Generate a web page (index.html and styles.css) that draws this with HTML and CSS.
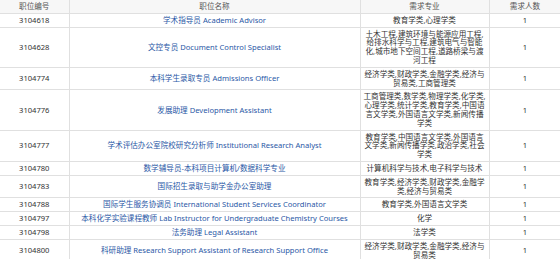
FILE: index.html
```html
<!DOCTYPE html>
<html lang="zh-CN">
<head>
<meta charset="utf-8">
<title>职位列表</title>
<link rel="stylesheet" href="styles.css">
</head>
<body>
<table class="jobs">
  <colgroup>
    <col class="c-id">
    <col class="c-name">
    <col class="c-major">
    <col class="c-num">
  </colgroup>
  <thead>
    <tr><th>职位编号</th><th>职位名称</th><th>需求专业</th><th>需求人数</th></tr>
  </thead>
  <tbody>
    <tr><td>3104618</td><td class="name"><a href="#">学术指导员 Academic Advisor</a></td><td class="major">教育学类,心理学类</td><td>1</td></tr>
    <tr><td>3104628</td><td class="name"><a href="#">文控专员 Document Control Specialist</a></td><td class="major">土木工程,建筑环境与能源应用工程,给排水科学与工程,建筑电气与智能化,城市地下空间工程,道路桥梁与渡河工程</td><td>1</td></tr>
    <tr><td>3104774</td><td class="name"><a href="#">本科学生录取专员 Admissions Officer</a></td><td class="major">经济学类,财政学类,金融学类,经济与贸易类,工商管理类</td><td>1</td></tr>
    <tr><td>3104776</td><td class="name"><a href="#">发展助理 Development Assistant</a></td><td class="major">工商管理类,数学类,物理学类,化学类,心理学类,统计学类,教育学类,中国语言文学类,外国语言文学类,新闻传播学类</td><td>1</td></tr>
    <tr><td>3104777</td><td class="name"><a href="#">学术评估办公室院校研究分析师 Institutional Research Analyst</a></td><td class="major">教育学类,中国语言文学类,外国语言文学类,新闻传播学类,政治学类,社会学类</td><td>1</td></tr>
    <tr><td>3104780</td><td class="name"><a href="#">数学辅导员-本科项目计算机/数据科学专业</a></td><td class="major">计算机科学与技术,电子科学与技术</td><td>1</td></tr>
    <tr><td>3104783</td><td class="name"><a href="#">国际招生录取与助学金办公室助理</a></td><td class="major">教育学类,经济学类,财政学类,金融学类,经济与贸易类</td><td>1</td></tr>
    <tr><td>3104788</td><td class="name"><a href="#">国际学生服务协调员 International Student Services Coordinator</a></td><td class="major">教育学类,外国语言文学类</td><td>1</td></tr>
    <tr><td>3104797</td><td class="name"><a href="#">本科化学实验课程教师 Lab Instructor for Undergraduate Chemistry Courses</a></td><td class="major">化学</td><td>1</td></tr>
    <tr><td>3104798</td><td class="name"><a href="#">法务助理 Legal Assistant</a></td><td class="major">法学类</td><td>1</td></tr>
    <tr><td>3104800</td><td class="name"><a href="#">科研助理 Research Support Assistant of Research Support Office</a></td><td class="major">经济学类,财政学类,金融学类,经济与贸易类</td><td>1</td></tr>
  </tbody>
</table>
</body>
</html>
```

FILE: styles.css
```css
html, body {
  margin: 0;
  padding: 0;
  background: #fff;
  overflow: hidden;
}

.jobs {
  width: 561px;
  table-layout: fixed;
  border-collapse: collapse;
  font-family: "Noto Sans", "Noto Sans CJK SC", sans-serif;
  font-size: 7.6px;
  line-height: 8.8px;
  color: #333;
}

.c-id { width: 69px; }
.c-name { width: 291px; }
.c-major { width: 129px; }
.c-num { width: 72px; }

.jobs th,
.jobs td {
  border: 1px solid #e0e0e0;
  padding: 2px 2px;
  text-align: center;
  vertical-align: middle;
  font-weight: normal;
}

.jobs tr > :first-child {
  border-left: none;
}

.jobs th {
  background: #f7f7f7;
  color: #555;
  border-top: none;
}

.jobs .name a {
  color: #2a58a6;
  text-decoration: none;
}

.jobs .major {
  color: #333;
}
```
